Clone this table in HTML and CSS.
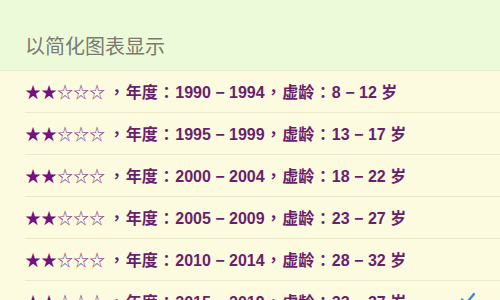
FILE: index.html
```html
<!DOCTYPE html>
<html lang="zh-CN">
<head>
<meta charset="utf-8">
<link rel="stylesheet" href="styles.css">
</head>
<body>
<div class="page">
  <div class="header"><span class="title">以简化图表显示</span></div>
  <ul class="list">
    <li class="row"><span class="text"><span class="stars">★★<span class="empty">☆☆☆</span></span><span class="p" lang="zh-TW">，</span>年度<span class="p" lang="zh-TW">：</span>1990 − 1994<span class="p" lang="zh-TW">，</span>虚龄<span class="p" lang="zh-TW">：</span>8 − 12 岁</span></li>
    <li class="row"><span class="text"><span class="stars">★★<span class="empty">☆☆☆</span></span><span class="p" lang="zh-TW">，</span>年度<span class="p" lang="zh-TW">：</span>1995 − 1999<span class="p" lang="zh-TW">，</span>虚龄<span class="p" lang="zh-TW">：</span>13 − 17 岁</span></li>
    <li class="row"><span class="text"><span class="stars">★★<span class="empty">☆☆☆</span></span><span class="p" lang="zh-TW">，</span>年度<span class="p" lang="zh-TW">：</span>2000 − 2004<span class="p" lang="zh-TW">，</span>虚龄<span class="p" lang="zh-TW">：</span>18 − 22 岁</span></li>
    <li class="row"><span class="text"><span class="stars">★★<span class="empty">☆☆☆</span></span><span class="p" lang="zh-TW">，</span>年度<span class="p" lang="zh-TW">：</span>2005 − 2009<span class="p" lang="zh-TW">，</span>虚龄<span class="p" lang="zh-TW">：</span>23 − 27 岁</span></li>
    <li class="row"><span class="text"><span class="stars">★★<span class="empty">☆☆☆</span></span><span class="p" lang="zh-TW">，</span>年度<span class="p" lang="zh-TW">：</span>2010 − 2014<span class="p" lang="zh-TW">，</span>虚龄<span class="p" lang="zh-TW">：</span>28 − 32 岁</span></li>
    <li class="row last"><span class="text"><span class="stars">★★<span class="empty">☆☆☆</span></span><span class="p" lang="zh-TW">，</span>年度<span class="p" lang="zh-TW">：</span>2015 − 2019<span class="p" lang="zh-TW">，</span>虚龄<span class="p" lang="zh-TW">：</span>33 − 37 岁</span>
      <svg class="check" width="14" height="12" viewBox="0 0 14 12"><path d="M1 6.5 L5 10.5 L13 1" fill="none" stroke="#3b7fd6" stroke-width="2.2" stroke-linecap="round" stroke-linejoin="round"/></svg>
    </li>
  </ul>
</div>
</body>
</html>
```

FILE: styles.css
```css
* { box-sizing: border-box; }
html, body { margin: 0; padding: 0; }
body {
  width: 500px;
  height: 300px;
  overflow: hidden;
  background: #fcfadf;
  font-family: "Liberation Sans", "Noto Sans CJK SC", sans-serif;
}
.page { display: flex; flex-direction: column; }
.header {
  height: 71px;
  background: #edfad9;
  border-bottom: 1px solid #e6ebc8;
  display: flex;
  align-items: flex-end;
  padding: 0 0 11px 25px;
}
.title {
  font-family: "Noto Sans CJK SC", sans-serif;
  font-size: 20px;
  color: #7a7a72;
  line-height: 26px;
}
.list { list-style: none; margin: 0; padding: 0 0 0 25px; }
.row {
  height: 42px;
  display: flex;
  align-items: center;
  border-bottom: 1px solid #ece7c6;
  padding-right: 25px;
}
.text {
  font-size: 16px;
  font-weight: bold;
  color: #6a1f6c;
  white-space: nowrap;
  margin-top: -2px;
}
.p {
  font-family: "Noto Sans CJK TC", sans-serif;
  display: inline-block;
  width: 1.1em;
  text-align: center;
}
.stars { font-family: "Noto Sans CJK SC", sans-serif; font-weight: normal; color: #74107f; margin-right: 3px; }
.empty { color: #8a3e8e; }
.check { margin-left: auto; align-self: flex-start; margin-top: 12px; }
```
